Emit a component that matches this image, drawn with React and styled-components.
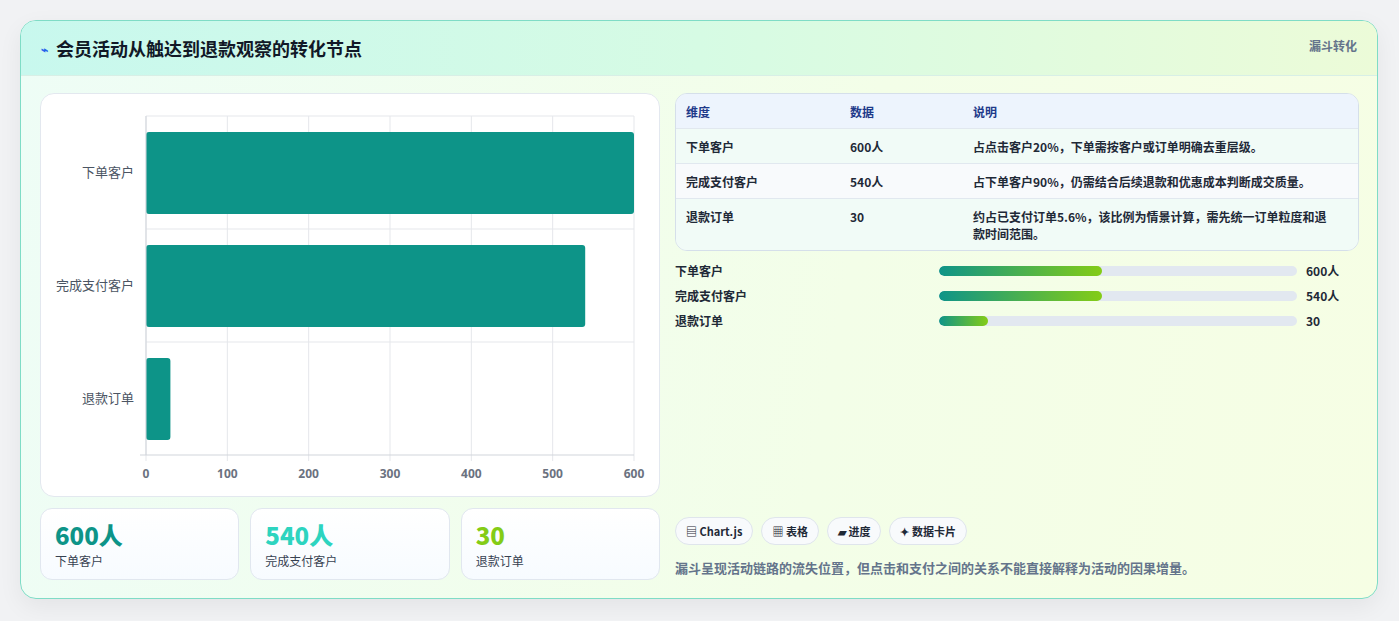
import React from 'react'
import styled, { createGlobalStyle } from 'styled-components'

const Global = createGlobalStyle`
  body { margin: 0; background: #f1f2f4; font-family: "Noto Sans CJK SC", "Noto Sans", sans-serif; }
`

const Page = styled.div`
  padding: 20px 21px 21px 20px;
`

const Card = styled.div`
  border: 1px solid #7fdcc6;
  border-radius: 16px;
  overflow: hidden;
  background: linear-gradient(100deg, #eefdf6 0%, #f3fee8 60%, #f6fee4 100%);
  box-shadow: 0 8px 24px rgba(0,0,0,0.06);
`

const Header = styled.div`
  height: 54px;
  display: flex;
  align-items: center;
  justify-content: space-between;
  padding: 0 20px;
  border-bottom: 1px solid #d8efe6;
  background: linear-gradient(90deg, #c8f8ee 0%, #d6fbe4 50%, #ecfbd8 100%);
`

const Title = styled.h1`
  margin: 0;
  font-size: 18px;
  font-weight: 700;
  color: #111827;
  display: flex;
  align-items: center;
  gap: 8px;
`

const Spark = styled.span`
  color: #2563eb;
  font-size: 12px;
`

const Tag = styled.span`
  font-size: 12px;
  font-weight: 700;
  color: #64748b;
  align-self: flex-start;
  margin-top: 16px;
`

const Body = styled.div`
  display: grid;
  grid-template-columns: 620px 1fr;
  gap: 15px;
  padding: 17px 18px 18px 19px;
`

const Left = styled.div`
  display: flex;
  flex-direction: column;
  gap: 11px;
`

const ChartBox = styled.div`
  height: 402px;
  background: #fff;
  border: 1px solid #e3e8ef;
  border-radius: 14px;
  position: relative;
  padding: 0;
`

const Stats = styled.div`
  display: grid;
  grid-template-columns: repeat(3, 1fr);
  gap: 11px;
`

const Stat = styled.div`
  height: 72px;
  box-sizing: border-box;
  border: 1px solid #e1e7ef;
  border-radius: 12px;
  background: linear-gradient(180deg, #ffffff, #f7fbff);
  padding: 11px 14px;
`

const StatVal = styled.div`
  font-size: 24px;
  font-weight: 800;
  color: ${p => p.$c};
  line-height: 30px;
`

const StatLabel = styled.div`
  font-size: 12px;
  color: #374151;
  margin-top: 2px;
`

const Right = styled.div`
  display: flex;
  flex-direction: column;
`

const Table = styled.div`
  border: 1px solid #d5dfea;
  border-radius: 12px;
  overflow: hidden;
  background: #f8fbfd;
  font-size: 12px;
  font-weight: 600;
  color: #1f2937;
`

const Row = styled.div`
  display: grid;
  grid-template-columns: 164px 123px 1fr;
  padding: 9px 10px 8px;
  border-top: ${p => (p.$head ? 'none' : '1px solid #e1e8ef')};
  background: ${p => (p.$head ? '#edf4fd' : p.$alt ? '#f8fafc' : '#f1fbf7')};
  color: ${p => (p.$head ? '#1e3a8a' : '#1f2937')};
  line-height: 17px;
  & > span:last-child { padding-right: 12px; }
`

const Bars = styled.div`
  display: flex;
  flex-direction: column;
  gap: 8px;
  margin-top: 11px;
`

const BarRow = styled.div`
  display: grid;
  grid-template-columns: 256px 357px 1fr;
  align-items: center;
  column-gap: 9px;
  font-size: 12px;
  font-weight: 600;
  color: #1f2937;
  height: 17px;
`

const Track = styled.div`
  height: 10px;
  border-radius: 5px;
  background: #e2e8f0;
  overflow: hidden;
  margin-left: -1px;
`

const Fill = styled.div`
  height: 100%;
  border-radius: 5px;
  background: linear-gradient(90deg, #0f9488, #84cc16);
`

const Chips = styled.div`
  margin-top: auto;
  display: flex;
  gap: 8px;
`

const Chip = styled.span`
  height: 28px;
  box-sizing: border-box;
  padding: 0 10px;
  border: 1px solid #dfe5ec;
  border-radius: 14px;
  background: #f8fafc;
  font-size: 11px;
  font-weight: 700;
  color: #1f2937;
  display: inline-flex;
  align-items: center;
  gap: 3px;
`

const Note = styled.p`
  margin: 13px 0 3px;
  font-size: 13px;
  font-weight: 600;
  color: #64748b;
`

function Chart() {
  const x0 = 105, x1 = 593, y0 = 22, y1 = 361
  const ticks = [0, 100, 200, 300, 400, 500, 600]
  const cats = [['下单客户', 600], ['完成支付客户', 540], ['退款订单', 30]]
  const band = (y1 - y0) / 3
  return (
    <svg width="620" height="402" style={{ display: 'block' }}>
      {ticks.map(t => {
        const x = x0 + (t / 600) * (x1 - x0)
        return (
          <g key={t}>
            <line x1={x} x2={x} y1={y0} y2={y1 + 6} stroke="#e5e7eb" />
            <text x={x} y={384} textAnchor="middle" fontSize="12" fontWeight="700" fill="#6b7280" fontFamily="Noto Sans, sans-serif">{t}</text>
          </g>
        )
      })}
      {cats.map(([n, v], i) => {
        const top = y0 + i * band
        return (
          <g key={n}>
            <line x1={x0} x2={x1} y1={top} y2={top} stroke="#e5e7eb" />
            <rect x={x0} y={top + 16} width={(v / 600) * (x1 - x0)} height={82} rx="3" fill="#0d9488" />
            <text x={x0 - 12} y={top + band / 2 + 4} textAnchor="end" fontSize="13" fill="#4b5563" fontFamily="Noto Sans CJK SC, sans-serif">{n}</text>
          </g>
        )
      })}
      <line x1={x0} x2={x0} y1={y0} y2={y1} stroke="#d1d5db" />
      <line x1={x0 - 6} x2={x1} y1={y1} y2={y1} stroke="#d1d5db" />
    </svg>
  )
}

export default function App() {
  return (
    <Page>
      <Global />
      <Card>
        <Header>
          <Title><Spark>⌁</Spark>会员活动从触达到退款观察的转化节点</Title>
          <Tag>漏斗转化</Tag>
        </Header>
        <Body>
          <Left>
            <ChartBox><Chart /></ChartBox>
            <Stats>
              <Stat><StatVal $c="#0d9488">600人</StatVal><StatLabel>下单客户</StatLabel></Stat>
              <Stat><StatVal $c="#2dd4bf">540人</StatVal><StatLabel>完成支付客户</StatLabel></Stat>
              <Stat><StatVal $c="#84cc16">30</StatVal><StatLabel>退款订单</StatLabel></Stat>
            </Stats>
          </Left>
          <Right>
            <Table>
              <Row $head><span>维度</span><span>数据</span><span>说明</span></Row>
              <Row><span>下单客户</span><span>600人</span><span>占点击客户20%，下单需按客户或订单明确去重层级。</span></Row>
              <Row $alt><span>完成支付客户</span><span>540人</span><span>占下单客户90%，仍需结合后续退款和优惠成本判断成交质量。</span></Row>
              <Row><span>退款订单</span><span>30</span><span>约占已支付订单5.6%，该比例为情景计算，需先统一订单粒度和退款时间范围。</span></Row>
            </Table>
            <Bars>
              {[['下单客户', 45.5, '600人'], ['完成支付客户', 45.5, '540人'], ['退款订单', 13.7, '30']].map(([n, w, v]) => (
                <BarRow key={n}><span>{n}</span><Track><Fill style={{ width: w + '%' }} /></Track><span>{v}</span></BarRow>
              ))}
            </Bars>
            <Chips>
              <Chip>▤ Chart.js</Chip>
              <Chip>▦ 表格</Chip>
              <Chip>▰ 进度</Chip>
              <Chip>✦ 数据卡片</Chip>
            </Chips>
            <Note>漏斗呈现活动链路的流失位置，但点击和支付之间的关系不能直接解释为活动的因果增量。</Note>
          </Right>
        </Body>
      </Card>
    </Page>
  )
}
